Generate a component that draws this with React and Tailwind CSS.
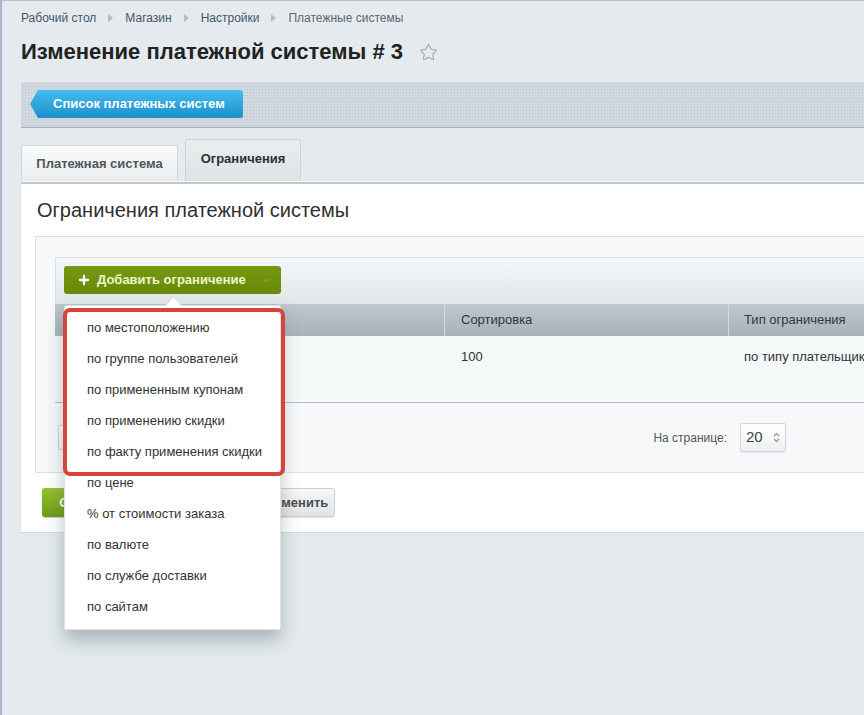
import React from 'react'
import { Star, Plus, ChevronDown } from 'lucide-react'

const crumbs = ['Рабочий стол', 'Магазин', 'Настройки', 'Платежные системы']

const menuItems = [
  'по местоположению',
  'по группе пользователей',
  'по примененным купонам',
  'по применению скидки',
  'по факту применения скидки',
  'по цене',
  '% от стоимости заказа',
  'по валюте',
  'по службе доставки',
  'по сайтам',
]

const Crumbs = () => (
  <div className="flex items-center pt-[10px] h-[24px] text-[12px] leading-[14px] text-[#46566a]">
    {crumbs.map((c, i) => (
      <React.Fragment key={i}>
        {i > 0 && (
          <span className="mx-[12px] w-0 h-0 border-y-[4px] border-y-transparent border-l-[5px] border-l-[#b3bcc5]" />
        )}
        <span className={i === crumbs.length - 1 ? 'text-[#5b6977]' : ''}>{c}</span>
      </React.Fragment>
    ))}
  </div>
)

const Spinner = () => (
  <svg width="7" height="11" viewBox="0 0 7 11" className="text-[#8a9399]">
    <path d="M1 4 L3.5 1.5 L6 4" fill="none" stroke="currentColor" strokeWidth="1.1" />
    <path d="M1 7 L3.5 9.5 L6 7" fill="none" stroke="currentColor" strokeWidth="1.1" />
  </svg>
)

export default function App() {
  return (
    <div className="relative h-[715px] w-[864px] overflow-hidden border-l-2 border-t border-l-[#a9b7cc] border-t-[#b7c0c7] bg-[#e4eaed] font-['Liberation_Sans',Arial,sans-serif]">
      <div className="pl-[19px]">
        <Crumbs />

        {/* title */}
        <div className="flex items-center mt-[13px] h-[28px]">
          <h1 className="text-[22px] leading-[28px] font-bold text-[#222]">Изменение платежной системы # 3</h1>
          <Star size={19} strokeWidth={1.3} className="ml-[16px] text-[#9aa4ac]" />
        </div>

        {/* toolbar */}
        <div className="mt-[15px] h-[47px] rounded-tl-[3px] border-t border-t-[#e8ecef] border-b border-b-[#a9b2b9] bg-[#d2d9de] bg-[radial-gradient(#bcc5cc_1px,transparent_1px)] bg-[length:3px_3px] pl-[9px] pt-[8px]">
          <button className="h-[28px] w-[213px] pl-[23px] text-left text-[13px] font-bold text-white rounded-r-[3px] bg-gradient-to-b from-[#44bdf0] to-[#1b8fcc] [clip-path:polygon(8px_0,100%_0,100%_100%,8px_100%,0_50%)] shadow-[0_1px_1px_rgba(0,0,0,0.25)]">
            Список платежных систем
          </button>
        </div>

        {/* tabs */}
        <div className="mt-[11px] flex items-end gap-[7px] h-[42px]">
          <div className="h-[36px] w-[157px] flex items-center justify-center rounded-t-[3px] border border-b-0 border-[#d0d6da] bg-gradient-to-b from-[#f9fafb] to-[#e9edef] text-[13px] font-bold text-[#555]">
            Платежная система
          </div>
          <div className="h-[42px] w-[116px] flex items-center justify-center pb-[4px] rounded-t-[3px] border border-b-0 border-[#cdd3d7] bg-gradient-to-b from-[#e9edef] to-[#dde3e6] text-[13px] font-bold text-[#2f2f2f]">
            Ограничения
          </div>
        </div>
        <div className="h-[1px] bg-[#f4f6f7]" />

        {/* panel */}
        <div className="border-t-2 border-t-[#c1c8cc] border-b border-b-[#d3d9dc] bg-white pl-[14px] pt-[14px] pb-[15px]">
          <h2 className="ml-[2px] text-[20px] leading-[24px] text-[#303030]">Ограничения платежной системы</h2>

          <div className="mt-[14px] border border-r-0 border-[#dadfe2] bg-[#f6f8f9] pt-[20px] pl-[19px]">
            {/* grid toolbar */}
            <div className="h-[47px] border-t border-l border-[#d9dee1] bg-gradient-to-b from-[#f4f7f8] to-[#e0e6e9] pl-[8px] pt-[8px]">
              <button className="h-[28px] w-[217px] flex items-center rounded-[3px] bg-gradient-to-b from-[#77990f] to-[#67880a] pl-[13px] text-[13px] font-bold text-[#eef5c9]">
                <Plus size={14} strokeWidth={4} className="text-white" />
                <span className="ml-[6px]">Добавить ограничение</span>
                <ChevronDown size={11} strokeWidth={1.5} className="ml-[15px] text-[#a6bf63]" />
              </button>
            </div>

            {/* header */}
            <div className="flex h-[32px] bg-gradient-to-b from-[#bdc7cc] to-[#a8b3b9] text-[13px] text-[#2d3840]">
              <div className="w-[389px] shrink-0" />
              <div className="w-[284px] shrink-0 flex items-center pl-[16px] border-l border-l-[#d3d9dc]">Сортировка</div>
              <div className="flex-1 flex items-center pl-[15px] border-l border-l-[#d3d9dc] whitespace-nowrap">Тип ограничения</div>
            </div>

            {/* row */}
            <div className="flex h-[67px] border-b border-b-[#b5bcc1] bg-[#f4f8f9] text-[13px] text-[#333]">
              <div className="w-[389px] shrink-0" />
              <div className="w-[284px] shrink-0 pl-[17px] pt-[11px]">100</div>
              <div className="flex-1 pl-[16px] pt-[11px] whitespace-nowrap">по типу плательщика</div>
            </div>

            {/* footer */}
            <div className="flex items-center h-[69px]">
              <div className="w-[389px] shrink-0">
                <div className="ml-[3px] h-[25px] w-[40px] rounded-[2px] border border-[#cdd3d7] bg-gradient-to-b from-white to-[#eef1f2]" />
              </div>
              <div className="w-[284px] shrink-0 text-right text-[12px] text-[#555] pr-[1px]">На странице:</div>
              <div className="ml-[12px] h-[29px] w-[46px] shrink-0 flex items-center gap-[10px] pl-[5px] rounded-[2px] border border-[#cfd5d8] bg-gradient-to-b from-white to-[#edf0f1] shadow-[0_1px_1px_rgba(0,0,0,0.08)] text-[15px] text-[#444]">
                20
                <Spinner />
              </div>
            </div>
          </div>

          {/* buttons */}
          <div className="mt-[15px] flex gap-[8px] pl-[7px]">
            <button className="h-[29px] w-[104px] rounded-[3px] bg-gradient-to-b from-[#96c22f] to-[#6d9a13] text-[13px] font-bold text-white shadow-[0_1px_1px_rgba(0,0,0,0.2)]">
              Сохранить
            </button>
            <button className="h-[29px] w-[96px] rounded-[3px] border border-[#c8ced1] bg-gradient-to-b from-[#f6f8f9] to-[#dfe4e7] text-[13px] font-bold text-[#4a4a4a]">
              Применить
            </button>
            <button className="h-[29px] w-[77px] rounded-[3px] border border-[#c8ced1] bg-gradient-to-b from-[#f6f8f9] to-[#dfe4e7] text-[13px] font-bold text-[#4a4a4a] shadow-[0_1px_1px_rgba(0,0,0,0.12)]">
              Отменить
            </button>
          </div>
        </div>
      </div>

      {/* dropdown menu */}
      <div className="absolute left-[62px] top-[304px] w-[217px] h-[325px] rounded-[2px] border border-[#dde2e5] bg-white pt-[6px] shadow-[0_10px_18px_rgba(60,80,90,0.35)]">
        <div className="absolute -top-[6px] left-[103px] h-[11px] w-[11px] rotate-45 bg-white" />
        {menuItems.map((item, i) => (
          <div key={i} className="relative h-[31px] flex items-center pl-[22px] text-[13px] text-[#333] whitespace-nowrap">
            {item}
          </div>
        ))}
      </div>

      {/* red highlight */}
      <div className="absolute left-[61px] top-[307px] w-[222px] h-[168px] rounded-[7px] border-[4px] border-[#d8433a]" />
    </div>
  )
}
